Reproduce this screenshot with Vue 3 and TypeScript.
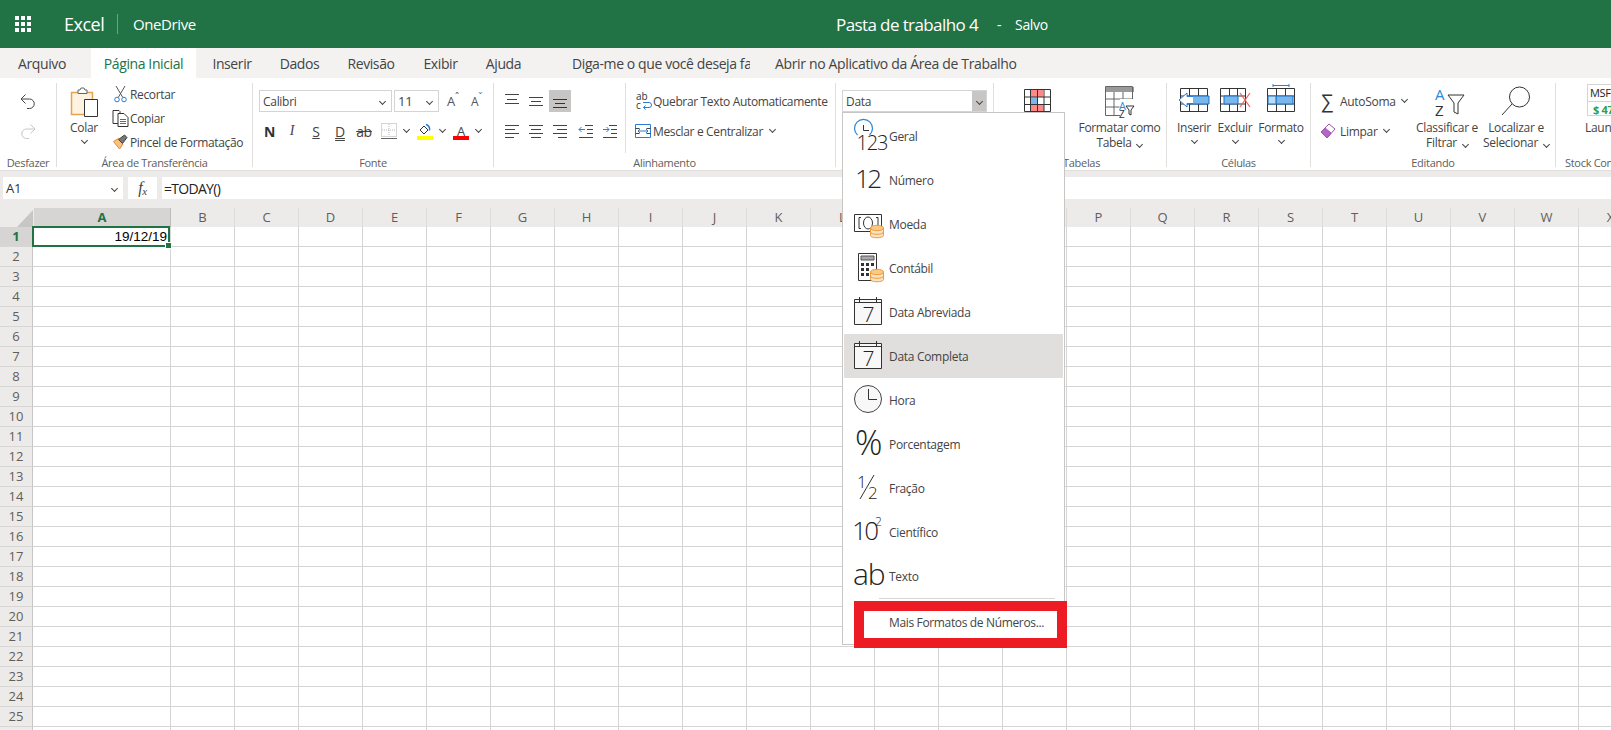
<script setup lang="ts">
const cols: string[] = 'ABCDEFGHIJKLMNOPQRSTUVWX'.split('')
const rows: number[] = Array.from({ length: 26 }, (_, i) => i + 1)
const menu: string[] = ['Geral', 'Número', 'Moeda', 'Contábil', 'Data Abreviada', 'Data Completa', 'Hora', 'Porcentagem', 'Fração', 'Científico', 'Texto']
const tabs = [
  { t: 'Arquivo', w: 84, m: 0 },
  { t: 'Página Inicial', w: 105, m: 7, active: true },
  { t: 'Inserir', w: 72, m: 0 },
  { t: 'Dados', w: 63, m: 0 },
  { t: 'Revisão', w: 80, m: 0 },
  { t: 'Exibir', w: 59, m: 0 },
  { t: 'Ajuda', w: 67, m: 0 }
]
const al = {
  top: 'M1 1.5h14M3 6.5h10M1 10.5h14',
  mid: 'M1 4.5h14M3 8.5h10M1 12.5h14',
  bot: 'M1 6.5h14M3 10.5h10M1 14.5h14',
  left: 'M1 2.5h14M1 6.5h10M1 10.5h14M1 14.5h9',
  center: 'M1 2.5h14M3 6.5h10M1 10.5h14M3 14.5h10',
  right: 'M1 2.5h14M5 6.5h10M1 10.5h14M6 14.5h9',
  outd: 'M7 2.5h8M9 6.5h6M9 10.5h6M1 14.5h14'
}
</script>

<template>
  <div class="app">
    <header class="top">
      <svg class="waffle" width="16" height="16" viewBox="0 0 16 16"><path fill="#fff" d="M0 0h4v4H0zM6 0h4v4H6zM12 0h4v4h-4zM0 6h4v4H0zM6 6h4v4H6zM12 6h4v4h-4zM0 12h4v4H0zM6 12h4v4H6zM12 12h4v4h-4z" /></svg>
      <span class="excel">Excel</span>
      <span class="bar-sep"></span>
      <span class="drive">OneDrive</span>
      <span class="doc">Pasta de trabalho 4</span>
      <span class="dash">-</span>
      <span class="saved">Salvo</span>
    </header>

    <nav class="tabs">
      <span v-for="t in tabs" :key="t.t" class="tab" :class="{ active: t.active }" :style="{ width: t.w + 'px', marginLeft: t.m + 'px' }">{{ t.t }}</span>
      <span class="search"><span>Diga-me o que você deseja fazer</span></span>
      <span class="open">Abrir no Aplicativo da Área de Trabalho</span>
    </nav>

    <section class="ribbon">
      <!-- Desfazer -->
      <div class="group g1">
        <div class="body undo">
          <svg width="18" height="18" viewBox="0 0 18 18" fill="none" stroke="#444"><path d="M6.500 2.500 2 7l4.500 4.500M2 7h8.500a4.700 4.700 0 0 1 0 9.500H8" /></svg>
          <svg width="18" height="18" viewBox="0 0 18 18" fill="none" stroke="#c8c6c4"><path d="M11.500 2.500 16 7l-4.500 4.500M16 7H7.500a4.700 4.700 0 0 0 0 9.500H10" /></svg>
        </div>
        <div class="label">Desfazer</div>
      </div>

      <!-- Área de Transferência -->
      <div class="group g2">
        <div class="body clip">
          <div class="big colar">
            <div class="big-icon">
              <svg width="30" height="30" viewBox="0 0 30 30" fill="none">
                <path d="M2.500 5.500h21v22h-21z" fill="#fdf3e3" stroke="#e8a24e" stroke-width="1.500" />
                <path d="M9 5V3h2l1-2h3l1 2h2v3.500H9z" fill="#fff" stroke="#666" />
                <path d="M15.500 12.500h13v17h-13z" fill="#fff" stroke="#333" />
              </svg>
            </div>
            <span>Colar</span>
            <i class="chev"></i>
          </div>
          <div class="small-col">
            <div class="row3">
              <svg class="ic" width="16" height="18" viewBox="0 0 16 18" fill="none"><path d="M3.500 1 10 12M12.500 1 6 12" stroke="#555" /><circle cx="4.500" cy="14.500" r="2.300" stroke="#2b7cd3" /><circle cx="11.500" cy="14.500" r="2.300" stroke="#2b7cd3" /></svg>
              <span>Recortar</span>
            </div>
            <div class="row3">
              <svg class="ic" width="16" height="18" viewBox="0 0 16 18" fill="none" stroke="#333"><path d="M.5 1.500h6l1 1v12h-7z" fill="#fff" /><path d="M5.500 4.500h6l4 4v9h-10z" fill="#fff" /><path d="M7.500 10.500h6M7.500 12.500h6M7.500 14.500h6" stroke="#666" /></svg>
              <span>Copiar</span>
            </div>
            <div class="row3">
              <svg class="ic" width="16" height="18" viewBox="0 0 16 18"><path d="M1 8.500 7 16l3.500-5L6 5.500z" fill="#f7c27e" stroke="#e8873a" /><path d="M6 6.500 12 2l2.500 2.500L10 10.500z" fill="#777" stroke="#444" /></svg>
              <span>Pincel de Formatação</span>
            </div>
          </div>
        </div>
        <div class="label">Área de Transferência</div>
      </div>

      <!-- Fonte -->
      <div class="group g3">
        <div class="body two">
          <div class="row2 fr1">
            <div class="select fontname"><span>Calibri</span><i class="chev"></i></div>
            <div class="select fontsize"><span>11</span><i class="chev"></i></div>
            <span class="grow">A<sup>ˆ</sup></span>
            <span class="shrink">A<sup>ˇ</sup></span>
          </div>
          <div class="row2 fr2">
            <b class="f n">N</b><i class="f it">I</i><u class="f">S</u><u class="f dbl">D</u><s class="f ab">ab</s>
            <svg class="bd" width="16" height="17" viewBox="0 0 16 17" fill="none"><path d="M.5.500h15v13H.5z" stroke="#aaa" stroke-dasharray="1 1" /><path d="M8 1v12M1 7h14" stroke="#bbb" stroke-dasharray="1 1" /><path d="M0 15.500h16" stroke="#666" /></svg>
            <i class="chev mini"></i>
            <svg class="fill" width="16" height="17" viewBox="0 0 16 17"><path d="M3 7l4-4 4 4-4 4z" fill="#fff" stroke="#333" /><path d="M9 1.500c3 1 4 3 3.500 6" fill="none" stroke="#2b7cd3" stroke-width="1.500" /><path d="M0 13h16v4H0z" fill="#ff0" /></svg>
            <i class="chev mini"></i>
            <span class="fcolor">A</span>
            <i class="chev mini"></i>
          </div>
        </div>
        <div class="label">Fonte</div>
      </div>

      <!-- Alinhamento -->
      <div class="group g4">
        <div class="body aligns">
          <div class="al-col">
            <div class="al-row">
              <svg class="al" width="16" height="16" viewBox="0 0 16 16"><path :d="al.top" stroke="#444" /></svg>
              <svg class="al" width="16" height="16" viewBox="0 0 16 16"><path :d="al.mid" stroke="#444" /></svg>
              <span class="al-on"><svg width="16" height="16" viewBox="0 0 16 16"><path :d="al.bot" stroke="#333" /></svg></span>
            </div>
            <div class="al-row second">
              <svg class="al" width="16" height="16" viewBox="0 0 16 16"><path :d="al.left" stroke="#444" /></svg>
              <svg class="al" width="16" height="16" viewBox="0 0 16 16"><path :d="al.center" stroke="#444" /></svg>
              <svg class="al" width="16" height="16" viewBox="0 0 16 16"><path :d="al.right" stroke="#444" /></svg>
              <svg class="al ind1" width="16" height="16" viewBox="0 0 16 16" fill="none"><path :d="al.outd" stroke="#444" /><path d="M1 6.500h6M3.500 4 1 6.500 3.500 9" stroke="#2b7cd3" /></svg>
              <svg class="al ind2" width="16" height="16" viewBox="0 0 16 16" fill="none"><path :d="al.outd" stroke="#444" /><path d="M1 6.500h6M4.500 4 7 6.500 4.500 9" stroke="#2b7cd3" /></svg>
            </div>
          </div>
          <div class="al-div"></div>
          <div class="wrap-col">
            <div class="row2 w1">
              <svg width="16" height="18" viewBox="0 0 16 18"><text x="0" y="8" class="svgt" font-size="10">ab</text><text x="0" y="17" class="svgt" font-size="10">c</text><path d="M7 10.500h6a2.500 2.500 0 0 1 0 5H7.500M9.500 13.500l-2 2 2 2" fill="none" stroke="#2b7cd3" /></svg>
              <span>Quebrar Texto Automaticamente</span>
            </div>
            <div class="row2 w2">
              <svg width="16" height="16" viewBox="0 0 16 16" fill="none"><path d="M.5 1.500h15v13H.5z" stroke="#2b7cd3" /><path d="M.5 5.500h4M11.500 5.500h4M.5 10.500h4M11.500 10.500h4" stroke="#444" /><path d="M3 8h10M5 6 3 8l2 2M11 6l2 2-2 2" stroke="#2b7cd3" /></svg>
              <span>Mesclar e Centralizar</span>
              <i class="chev mini"></i>
            </div>
          </div>
        </div>
        <div class="label">Alinhamento</div>
      </div>

      <!-- Número -->
      <div class="group g5">
        <div class="body nfmt">
          <div class="nselect"><span>Data</span><b><i class="chev"></i></b></div>
        </div>
        <div class="label"></div>
      </div>

      <!-- Tabelas -->
      <div class="group g6">
        <div class="body tables">
          <div class="big condf">
            <div class="big-icon">
              <svg width="30" height="24" viewBox="0 0 30 24" fill="none">
                <path d="M7 1h13v7H7zM7 16h14v7H7z" fill="#f88" />
                <path d="M7 8.500h8v7H7z" fill="#7ab7ea" />
                <path d="M1.500.500h26v22h-26zM1.500 8h26M1.500 15.500h26M7.500.500v22M14.500.500v22M21 .5v22" stroke="#333" />
              </svg>
            </div>
          </div>
          <div class="big fmt">
            <div class="big-icon">
              <svg width="30" height="32" viewBox="0 0 30 32" fill="none">
                <path d="M1 1h28v5H1z" fill="#999" />
                <path d="M.5.500h27v29H.5zM.5 13h27M.5 21h14M9 6v24M18 6v13" stroke="#666" />
                <path d="M15 13h14v18H15z" fill="#fff" />
                <text x="14" y="24" class="svgt blue" font-size="11">A</text>
                <text x="14" y="32" class="svgt" font-size="10">Z</text>
                <path d="M21 20h8l-3 4v5l-2-1v-4z" stroke="#333" />
              </svg>
            </div>
            <span>Formatar como</span>
            <span class="ch">Tabela <i class="chev mini"></i></span>
          </div>
        </div>
        <div class="label lab-tab">Tabelas</div>
      </div>

      <!-- Células -->
      <div class="group g7">
        <div class="body cells">
          <div class="big c-ins">
            <div class="big-icon ctop">
              <svg width="32" height="24" viewBox="0 0 32 24" fill="none">
                <path d="M2.500.500h27v23h-27zM2.500 8h27M2.500 16h27M11.500.500v23M20.500.500v23" stroke="#333" />
                <path d="M8 8h23v8H8z" fill="#7ab7ea" stroke="#1b6ec2" />
                <path d="M15 8.500H9V5L1 12 9 19v-3.500h6" fill="#fff" stroke="#2b7cd3" />
              </svg>
            </div>
            <span>Inserir</span>
            <i class="chev"></i>
          </div>
          <div class="big c-exc">
            <div class="big-icon ctop">
              <svg width="32" height="24" viewBox="0 0 32 24" fill="none">
                <path d="M1.500.500h25v23h-25zM1.500 8h25M1.500 16h25M10.500.500v23M18.500.500v23" stroke="#333" />
                <path d="M5 8h14v8H5z" fill="#7ab7ea" stroke="#1b6ec2" />
                <path d="M21 5l10 14M31 5 21 19" stroke="#f25c5c" stroke-width="1.200" />
              </svg>
            </div>
            <span>Excluir</span>
            <i class="chev"></i>
          </div>
          <div class="big c-for">
            <div class="big-icon ctop2">
              <svg width="30" height="28" viewBox="0 0 30 28" fill="none">
                <path d="M7 1.500h16M7 0v3M23 0v3" stroke="#2b7cd3" />
                <path d="M1.500 4.500h27v23h-27zM1.500 12h27M1.500 20h27M10.500 4.500v23M19.500 4.500v23" stroke="#333" />
                <path d="M10 12h17v8H10z" fill="#7ab7ea" stroke="#1b6ec2" />
                <path d="M2 12h8v8H2z" fill="#bcdcf5" stroke="#1b6ec2" />
              </svg>
            </div>
            <span>Formato</span>
            <i class="chev"></i>
          </div>
        </div>
        <div class="label">Células</div>
      </div>

      <!-- Editando -->
      <div class="group g8">
        <div class="body edit">
          <div class="edit-col">
            <div class="row2 e1">
              <span class="sigma">∑</span><span>AutoSoma</span><i class="chev mini"></i>
            </div>
            <div class="row2 e2">
              <svg width="16" height="18" viewBox="0 0 16 18"><path d="M1 10 9 2l6 5-8 9z" fill="#fff" stroke="#a24fb1" /><path d="M1 10l4-4 6 5-4 5z" fill="#b565c4" stroke="#a24fb1" /></svg>
              <span>Limpar</span><i class="chev mini"></i>
            </div>
          </div>
          <div class="big sortf">
            <div class="big-icon sorti">
              <svg width="30" height="32" viewBox="0 0 30 32" fill="none">
                <text x="0" y="14" class="svgt blue" font-size="15">A</text>
                <text x="0" y="30" class="svgt" font-size="15">Z</text>
                <path d="M13 9h16l-6 8v11l-4-2v-9z" stroke="#333" />
              </svg>
            </div>
            <span>Classificar e</span>
            <span class="ch">Filtrar <i class="chev mini"></i></span>
          </div>
          <div class="big findb">
            <div class="big-icon">
              <svg width="30" height="32" viewBox="0 0 30 32" fill="none">
                <circle cx="18.500" cy="12" r="10" fill="#fff" stroke="#333" />
                <path d="M11 19 1 30" stroke="#333" />
              </svg>
            </div>
            <span>Localizar e</span>
            <span class="ch">Selecionar <i class="chev mini"></i></span>
          </div>
        </div>
        <div class="label">Editando</div>
      </div>

      <!-- Stock -->
      <div class="group g9">
        <div class="body stock">
          <div class="card"><div class="c1">MSFT</div><div class="c2">$ 47</div></div>
          <span class="launch">Launch</span>
        </div>
        <div class="label left">Stock Connector</div>
      </div>
    </section>

    <section class="fbar">
      <div class="namebox"><span>A1</span><i class="chev"></i></div>
      <div class="fxbox"><em>f</em><sub>x</sub></div>
      <div class="formula">=TODAY()</div>
    </section>

    <section class="sheet">
      <div class="head">
        <div class="corner"><span class="tri"></span></div>
        <div v-for="c in cols" :key="c" class="ch-cell" :class="{ sel: c === 'A' }">{{ c }}</div>
      </div>
      <div v-for="r in rows" :key="r" class="grow-row">
        <div class="rh" :class="{ sel: r === 1 }">{{ r }}</div>
        <div v-for="c in cols" :key="c" class="cell" :class="{ wide: c === 'A' }">
          <template v-if="r === 1 && c === 'A'">
            <span class="selbox"><i></i></span>
            <span class="date">19/12/19</span>
          </template>
        </div>
      </div>
    </section>

    <!-- Menu de formatos -->
    <div class="menu">
      <div v-for="(m, i) in menu" :key="m" class="item" :class="{ on: i === 5 }">
        <svg width="39" height="44" viewBox="0 0 39 44" fill="none">
          <g v-if="i === 0">
            <path d="M7.500 21a9 9 0 1 1 12 0" stroke="#2b88d8" stroke-width="1.200" />
            <path d="M13.500 11v5.500H19" stroke="#333" />
            <text x="6.500" y="36" class="lt tight" font-size="20">123</text>
          </g>
          <text v-if="i === 1" x="5" y="30" class="lt tight2" font-size="26">12</text>
          <g v-if="i === 2">
            <path d="M4.500 12.500h27v17h-27z" fill="#fff" stroke="#333" />
            <path d="M11 15.500H9v11h2M26 15.500h2v11h-2" stroke="#333" />
            <ellipse cx="18" cy="21" rx="4.500" ry="6" stroke="#333" />
            <path d="M20.500 26.500v7c0 3 13 3 13 0v-7" fill="#fbe3c0" stroke="#ed9b40" />
            <path d="M20.500 30c0 3 13 3 13 0" stroke="#ed9b40" />
            <ellipse cx="27" cy="26" rx="6.500" ry="2.700" fill="#fbc97f" stroke="#ed9b40" />
          </g>
          <g v-if="i === 3">
            <path d="M8.500 7.500h18v27h-18z" fill="#fff" stroke="#333" />
            <path d="M11 10h13v4H11z" fill="#aaa" stroke="#555" />
            <path d="M11 17h3v3h-3zM16 17h3v3h-3zM21 17h3v3h-3zM11 22h3v3h-3zM16 22h3v3h-3zM11 27h3v3h-3zM16 27h3v3h-3z" fill="#333" />
            <path d="M20.500 26.500v7c0 3 13 3 13 0v-7" fill="#fbe3c0" stroke="#ed9b40" />
            <path d="M20.500 30c0 3 13 3 13 0" stroke="#ed9b40" />
            <ellipse cx="27" cy="26" rx="6.500" ry="2.700" fill="#fbc97f" stroke="#ed9b40" />
          </g>
          <g v-if="i === 4 || i === 5">
            <path d="M4.500 9.500h27v25h-27z" fill="#f8f8f8" stroke="#333" />
            <path d="M4.500 12.500h27" stroke="#333" />
            <path d="M9.500 7v5M26.500 7v5" stroke="#333" />
            <text x="12.500" y="32" class="lt" font-size="21">7</text>
          </g>
          <g v-if="i === 6">
            <circle cx="18" cy="21" r="13.500" fill="#f8f8f8" stroke="#444" />
            <path d="M18.500 11v10.500H27" stroke="#333" />
          </g>
          <text v-if="i === 7" x="5" y="33" class="lt" font-size="34">%</text>
          <g v-if="i === 8">
            <text x="7" y="22" class="lt" font-size="17">1</text>
            <path d="M24 9 10 33" stroke="#333" />
            <text x="18" y="33" class="lt" font-size="17">2</text>
          </g>
          <g v-if="i === 9">
            <text x="2" y="30" class="lt tight2" font-size="26">10</text>
            <text x="25" y="16" class="lt" font-size="12">2</text>
          </g>
          <text v-if="i === 10" x="3" y="30.500" class="lt tight" font-size="30">ab</text>
        </svg>
        <span>{{ m }}</span>
      </div>
      <div class="msep"></div>
      <div class="more">Mais Formatos de Números...</div>
    </div>
    <div class="redbox"></div>
  </div>
</template>

<style>
html, body { margin: 0; padding: 0; background: #fff; overflow: hidden; }
</style>

<style scoped>
.app {
  position: relative;
  width: 1611px;
  height: 730px;
  overflow: hidden;
  background: #fff;
  font-family: "Open Sans", "Noto Sans", sans-serif;
  font-size: 12px;
  letter-spacing: -0.3px;
  color: #444;
}
.chev {
  display: inline-block;
  width: 4px;
  height: 4px;
  border-right: 1px solid #444;
  border-bottom: 1px solid #444;
  transform: rotate(45deg);
}
.svgt { font-family: "Open Sans", sans-serif; fill: #333; letter-spacing: 0; }
.blue { fill: #2b88d8; }
.lt { font-family: "Open Sans", sans-serif; font-weight: 300; fill: #222; letter-spacing: 0; }
.tight { letter-spacing: -1.2px; }
.tight2 { letter-spacing: -2.5px; }

/* top bar */
.top { height: 48px; background: #217346; color: #fff; display: flex; align-items: center; }
.waffle { margin-left: 15px; }
.excel { margin-left: 33px; font-size: 18px; letter-spacing: -0.5px; width: 53px; }
.bar-sep { width: 1px; height: 20px; background: #6aa283; }
.drive { margin-left: 15px; font-size: 15px; letter-spacing: -0.4px; width: 703px; }
.doc { font-size: 17px; letter-spacing: -0.6px; width: 161px; }
.dash { font-size: 14px; width: 18px; }
.saved { font-size: 14px; letter-spacing: -0.3px; }

/* tabs */
.tabs { height: 30px; background: #f3f2f1; display: flex; align-items: stretch; font-size: 14px; letter-spacing: -0.4px; color: #444; }
.tab { display: flex; align-items: center; justify-content: center; }
.tab.active { background: #fff; color: #217346; }
.search { margin-left: 35px; width: 178px; overflow: hidden; white-space: nowrap; display: flex; align-items: center; }
.open { margin-left: 25px; display: flex; align-items: center; white-space: nowrap; letter-spacing: -0.35px; }

/* ribbon */
.ribbon { height: 93px; box-sizing: border-box; padding-top: 5px; display: flex; align-items: flex-start; background: #fff; border-bottom: 1px solid #e1dfdd; }
.group { height: 84px; box-sizing: border-box; border-right: 1px solid #e1dfdd; display: flex; flex-direction: column; flex: none; }
.body { height: 72px; display: flex; flex: none; }
.label { height: 16px; line-height: 16px; font-size: 11px; color: #605e5c; text-align: center; white-space: nowrap; letter-spacing: -0.3px; flex: none; }
.label.left { text-align: left; padding-left: 9px; }
.big { display: flex; flex-direction: column; align-items: center; line-height: 15px; white-space: nowrap; flex: none; }
.big-icon { height: 37px; display: flex; align-items: center; justify-content: center; }
.big .chev { margin-top: 3px; }
.ch { display: flex; align-items: center; gap: 6px; }
.mini { flex: none; margin-top: -3px; }

.g1 { width: 57px; }
.undo { flex-direction: column; align-items: center; gap: 12px; padding-top: 9px; height: 63px; }
.g2 { width: 196px; }
.colar { width: 46px; margin-left: 4px; font-size: 12px; }
.small-col { margin-top: -1px; margin-left: 5px; }
.row3 { height: 24px; display: flex; align-items: center; white-space: nowrap; letter-spacing: -0.35px; }
.row3 svg { width: 17px; margin-right: 1px; }

.g3 { width: 241px; }
.two { flex-direction: column; padding-left: 6px; padding-top: 7px; height: 65px; }
.row2 { display: flex; align-items: center; white-space: nowrap; }
.fr1 { height: 22px; }
.select { height: 22px; box-sizing: border-box; border: 1px solid #d4d4d4; display: flex; align-items: center; justify-content: space-between; padding: 0 6px 0 3px; font-size: 12px; }
.fontname { width: 133px; }
.fontsize { width: 45px; margin-left: 2px; font-size: 13px; }
.grow, .shrink { font-size: 13px; position: relative; margin-left: 8px; color: #555; width: 16px; }
.shrink { margin-left: 8px; font-size: 12px; }
sup { font-size: 10px; line-height: 0; color: #2b88d8; }
.grow sup { color: #555; }
.fr2 { height: 22px; margin-top: 8px; position: relative; }
.f { width: 24px; text-align: center; flex: none; font-size: 14px; color: #444; font-style: normal; }
.n { font-weight: 700; color: #333; width: 21px; }
.it { font-style: italic; font-family: "Liberation Serif", serif; }
.dbl { text-decoration-style: double; }
.bd { margin-left: 5px; }
.fr2 .mini { margin-left: 7px; margin-right: 8px; }
.fcolor { width: 16px; font-size: 13px; text-align: center; line-height: 16px; border-bottom: 4px solid #f00; box-sizing: border-box; height: 17px; }

.g4 { width: 342px; }
.al-col { padding: 7px 0 0 10px; width: 131px; box-sizing: border-box; }
.al-row { height: 22px; display: flex; align-items: center; }
.al-row .al { margin-right: 8px; flex: none; }
.al-row.second { margin-top: 8px; }
.al-on { width: 22px; height: 22px; background: #c8c6c4; display: flex; align-items: center; justify-content: center; margin-left: -3px; }
.ind1 { margin-left: 2px; }
.al-div { width: 1px; height: 70px; background: #e1dfdd; }
.wrap-col { padding-left: 9px; padding-top: 4px; letter-spacing: -0.35px; }
.w1 { height: 28px; gap: 1px; padding-left: 1px; }
.w2 { height: 28px; gap: 2px; margin-top: 2px; }
.w2 .mini { margin-left: 5px; }

.g5 { width: 158px; }
.nfmt { padding: 7px 0 0 6px; height: 65px; }
.nselect { width: 145px; height: 22px; box-sizing: border-box; border: 1px solid #d4d4d4; display: flex; align-items: center; justify-content: space-between; padding-left: 3px; }
.nselect b { width: 14px; height: 20px; background: #c8c6c4; display: flex; align-items: center; justify-content: center; }

.g6 { width: 173px; }
.condf { margin-left: 29px; width: 30px; }
.condf .big-icon { margin-top: -1px; }
.fmt { margin-left: 24px; width: 85px; letter-spacing: -0.35px; }
.lab-tab { padding-left: 69px; text-align: left; }

.g7 { width: 144px; }
.cells { padding-left: 4px; }
.c-ins { width: 46px; }
.c-exc { width: 36px; }
.c-for { width: 56px; }
.ctop, .ctop2 { align-items: flex-start; }
.ctop svg { margin-top: 5px; }
.ctop2 svg { margin-top: 1px; }

.g8 { width: 245px; }
.edit-col { width: 114px; padding-top: 3px; padding-left: 10px; box-sizing: border-box; height: 70px; }
.edit-col .row2 { height: 30px; gap: 4px; }
.edit-col .mini { margin-left: 2px; }
.e2 { margin-left: -1px; }
.sigma { font-size: 19px; width: 15px; line-height: 20px; color: #333; }
.sortf { width: 64px; margin-left: -10px; }
.sorti svg { margin-left: 5px; }
.findb { width: 74px; }
.findb .big-icon { margin-top: -2px; height: 39px; }

.g9 { width: 60px; border-right: 0; }
.stock { flex-direction: column; padding-left: 31px; padding-top: 1px; overflow: hidden; height: 71px; }
.card { width: 60px; height: 32px; border: 1px solid #d4d4d4; font-size: 11px; box-sizing: border-box; flex: none; }
.c1 { height: 16px; line-height: 16px; padding-left: 2px; border-bottom: 1px solid #d4d4d4; color: #222; }
.c2 { line-height: 15px; padding-left: 5px; font-weight: 700; color: #2e9e4f; }
.launch { margin-top: 4px; margin-left: -2px; line-height: 15px; }

/* formula */
.fbar { height: 37px; background: #edebe9; box-sizing: border-box; padding: 6px 0 0 3px; display: flex; align-items: flex-start; gap: 5px; }
.namebox { width: 120px; height: 22px; background: #fff; display: flex; align-items: center; justify-content: space-between; padding: 0 6px 0 3px; box-sizing: border-box; font-size: 13px; color: #333; }
.fxbox { width: 29px; height: 22px; background: #fff; font-family: "Liberation Serif", serif; font-size: 16px; color: #444; display: flex; align-items: center; justify-content: center; }
.fxbox sub { font-size: 11px; line-height: 0; margin-top: 5px; font-style: italic; }
.formula { flex: 1; height: 22px; background: #fff; line-height: 23px; font-size: 14px; padding-left: 2px; color: #222; letter-spacing: -0.7px; }

/* sheet */
.sheet { font-size: 13px; }
.head { height: 19px; display: flex; background: #edebe9; }
.corner { width: 34px; flex: none; position: relative; }
.tri { position: absolute; right: 1px; bottom: 0; width: 0; height: 0; border-left: 16px solid transparent; border-bottom: 17px solid #c8c6c4; }
.ch-cell { width: 63px; flex: none; border-right: 1px solid #dddbd9; text-align: center; line-height: 19px; color: #605e5c; letter-spacing: 0; }
.ch-cell.sel { width: 136px; background: #d6d5d4; color: #217346; font-weight: 700; border-right-color: #bbb; }
.grow-row { height: 20px; display: flex; }
.rh { width: 33px; flex: none; height: 20px; box-sizing: border-box; background: #edebe9; border-right: 1px solid #c8c6c4; border-bottom: 1px solid #d8d6d4; text-align: center; line-height: 19px; color: #605e5c; letter-spacing: 0; }
.rh.sel { background: #d6d5d4; color: #217346; font-weight: 700; }
.cell { width: 64px; height: 20px; flex: none; box-sizing: border-box; border-right: 1px solid #d4d4d4; border-bottom: 1px solid #d4d4d4; position: relative; }
.cell.wide { width: 138px; }
.selbox { position: absolute; left: -1px; top: -1px; width: 138px; height: 21px; border: 2px solid #217346; box-sizing: border-box; z-index: 2; }
.selbox i { position: absolute; right: -4px; bottom: -4px; width: 5px; height: 5px; background: #217346; border: 1px solid #fff; }
.date { position: absolute; right: 3px; top: 0; line-height: 20px; font-family: "Liberation Sans", sans-serif; font-size: 13.500px; color: #000; letter-spacing: 0; z-index: 3; }

/* menu */
.menu { position: absolute; left: 842px; top: 112px; width: 223px; height: 533px; box-sizing: border-box; border: 1px solid #c8c6c4; background: #fff; padding-top: 1px; z-index: 5; }
.item { height: 44px; display: flex; align-items: center; margin: 0 1px; }
.item svg { margin-left: 6px; flex: none; }
.item.on { background: #e1dfdd; }
.msep { height: 1px; background: #d8d6d4; margin: 0 9px 0 36px; }
.more { padding-left: 46px; line-height: 48px; letter-spacing: -0.35px; }
.redbox { position: absolute; left: 854px; top: 601px; width: 213px; height: 47px; box-sizing: border-box; border: 10px solid #ed1c24; z-index: 6; }
</style>
